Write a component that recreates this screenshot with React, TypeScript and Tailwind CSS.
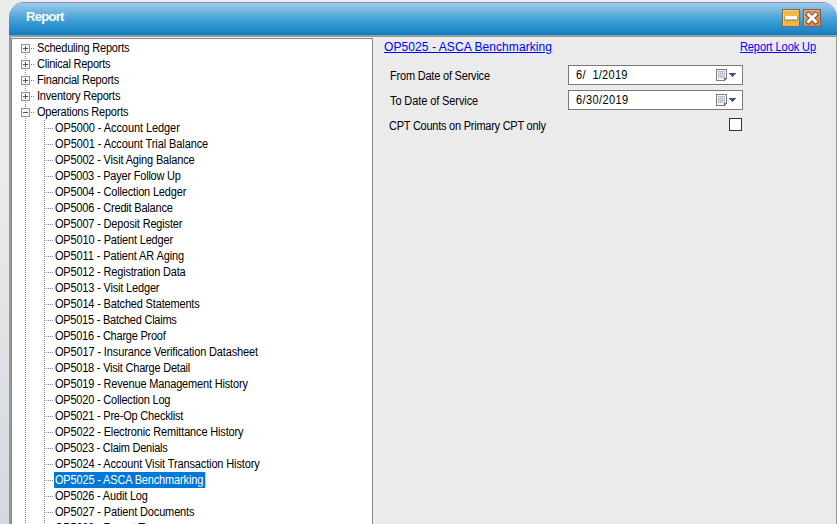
import React from "react";

// Each entry holds a label and its total tracking adjustment in pixels.
const groups: [string, number][] = [
  ["Scheduling Reports", -4], ["Clinical Reports", -4], ["Financial Reports", -4],
  ["Inventory Reports", -4], ["Operations Reports", -4.5],
];

const reports: [string, number][] = [
  ["OP5000 - Account Ledger", -2], ["OP5001 - Account Trial Balance", -3], ["OP5002 - Visit Aging Balance", -5],
  ["OP5003 - Payer Follow Up", -5.5], ["OP5004 - Collection Ledger", -5], ["OP5006 - Credit Balance", -5],
  ["OP5007 - Deposit Register", -4.5], ["OP5010 - Patient Ledger", -4], ["OP5011 - Patient AR Aging", -3],
  ["OP5012 - Registration Data", -5], ["OP5013 - Visit Ledger", -4], ["OP5014 - Batched Statements", -5],
  ["OP5015 - Batched Claims", -6], ["OP5016 - Charge Proof", -5.5], ["OP5017 - Insurance Verification Datasheet", -6],
  ["OP5018 - Visit Charge Detail", -6.5], ["OP5019 - Revenue Management History", -6.5], ["OP5020 - Collection Log", -5],
  ["OP5021 - Pre-Op Checklist", -5.5], ["OP5022 - Electronic Remittance History", -6.5], ["OP5023 - Claim Denials", -6],
  ["OP5024 - Account Visit Transaction History", -6], ["OP5025 - ASCA Benchmarking", -4.5], ["OP5026 - Audit Log", -3.5],
  ["OP5027 - Patient Documents", -4], ["OP5028 - Report Types", -4],
];

function Label({ text, fit = 0, className = "origin-left scale-x-[0.917]" }: { text: string; fit?: number; className?: string }) {
  return <span className={`inline-block whitespace-pre ${className}`} style={{ letterSpacing: `${fit / text.length}px` }}>{text}</span>;
}

function Expander({ open, first }: { open: boolean; first: boolean }) {
  return (
    <svg width="16" height="16" viewBox="0 0 16 16" className="shrink-0" shapeRendering="crispEdges">
      {!first && <path d="M4.5 0V4" stroke="#808080" strokeDasharray="1 1" />}
      <path d="M4.5 14V16" stroke="#808080" strokeDasharray="1 1" />
      <rect x="0.5" y="4.5" width="8" height="8" fill="#f5f5f5" stroke="#919191" />
      <path d="M2 8.5H7" stroke="#3b53a2" />
      {!open && <path d="M4.5 6V11" stroke="#3b53a2" />}
      <path d="M10 8.5H13" stroke="#808080" strokeDasharray="1 1" />
    </svg>
  );
}

function Branch() {
  return (
    <svg width="33" height="16" viewBox="0 0 33 16" className="shrink-0" shapeRendering="crispEdges">
      <path d="M4.5 0V16M23.5 0V16M25 8.5H32" stroke="#808080" strokeDasharray="1 1" />
    </svg>
  );
}

function DateField({ value }: { value: string }) {
  return (
    <div className="flex h-5 w-[175px] items-center border border-[#7a7a7a] bg-white pl-[7px]">
      <div className="w-[140px]"><Label text={value} fit={value.includes(" ") ? 3 : 4} /></div>
      <svg width="24" height="14" viewBox="0 0 24 14" shapeRendering="crispEdges">
        <path d="M.5 1.5h10v8l-2 3h-8z" fill="#f6f6fa" stroke="#82777b" />
        <path d="M2 3h7v7H2z" fill="#b5bfd0" />
        <path d="M3 4h1v1H3zM5 4h1v1H5zM7 4h1v1H7zM3 6h1v1H3zM5 6h1v1H5zM7 6h1v1H7zM3 8h1v1H3zM5 8h1v1H5zM7 8h1v1H7z" fill="white" />
        <path d="M8 10h3v1h-1v1H9v1H8z" fill="#75696b" />
        <path d="M13 5h7v1h-1v1h-1v1h-1v1h-1V8h-1V7h-1V6h-1z" fill="#42597f" />
      </svg>
    </div>
  );
}

export default function App() {
  return (
    <div className="flex h-[524px] w-[837px] overflow-hidden bg-linear-to-b from-[#ececec] from-30% to-[#d2d9df] pt-[2px] pl-[9px] font-['Liberation_Sans',sans-serif] text-[12px] leading-4 text-black">
      <div className="flex w-[828px] flex-col overflow-hidden rounded-t-[15px] border-t border-[#8f8bc4] bg-[#ebebeb]">
        <header className="flex h-8 shrink-0 items-start justify-between bg-linear-to-b from-[#9acbea] via-[#43a2d7] to-[#087fc4] pt-[6px] pr-4 pl-[17px]">
          <h1 className="text-[13px] font-bold tracking-[-0.7px] text-white">Report</h1>
          <div className="flex gap-[3px]">
            <svg width="18" height="18">
              <rect x=".5" y=".5" width="17" height="17" fill="#f0b64a" stroke="#7d6b4c" />
              <path d="M1.5 16V1.5H16" fill="none" stroke="#f6cf83" />
              <rect x="2.5" y="7.5" width="13" height="4" fill="#8d7144" />
              <rect x="3" y="7" width="12" height="3.5" fill="white" />
            </svg>
            <svg width="18" height="18">
              <rect x=".5" y=".5" width="17" height="17" fill="#dd8d50" stroke="#7c5f50" />
              <path d="M1.5 16V1.5H16" fill="none" stroke="#e6ae86" />
              <path d="M5.5 5.8l7 7M12.5 5.8l-7 7" stroke="#7b5847" strokeWidth="5" strokeLinecap="square" />
              <path d="M5.5 5.5l7 7M12.5 5.5l-7 7" stroke="white" strokeWidth="3" strokeLinecap="square" />
            </svg>
          </div>
        </header>
        <div className="flex min-h-0 flex-1 border-t-2 border-r border-l-2 border-[#999]">
          <aside className="mt-px h-[490px] w-[362px] shrink-0 overflow-hidden border border-[#828790] bg-white pt-px pl-[9px]">
            {groups.map(([text, fit], i) => (
              <div key={text} className="flex h-4 whitespace-nowrap">
                <Expander open={i === 4} first={i === 0} />
                <Label text={text} fit={fit} />
              </div>
            ))}
            {reports.map(([text, fit]) => (
              <div key={text} className="flex h-4 whitespace-nowrap">
                <Branch />
                <Label text={text} fit={fit} className={text.startsWith("OP5025") ? "origin-left scale-x-[0.917] bg-[#0078d7] pr-[2px] pl-px text-white" : "origin-left scale-x-[0.917] pl-px"} />
              </div>
            ))}
          </aside>
          <main className="flex-1 pt-[2px] pl-[11px]">
            <div className="flex justify-between pr-5 text-[#0000ff] underline">
              <Label text="OP5025 - ASCA Benchmarking" className="text-[12px]" fit={2} />
              <Label text="Report Look Up" fit={-1} className="origin-right scale-x-[0.917]" />
            </div>
            <div className="mt-[10px] flex h-5 items-center">
              <div className="w-[184px] pt-[2px] pl-[6px]"><Label text="From Date of Service" fit={-4.5} /></div>
              <DateField value="6/  1/2019" />
            </div>
            <div className="mt-[5px] flex h-5 items-center">
              <div className="w-[184px] pt-[2px] pl-[6px]"><Label text="To Date of Service" fit={-2} /></div>
              <DateField value="6/30/2019" />
            </div>
            <div className="mt-[8px] flex h-[13px] items-center">
              <div className="w-[345px] pt-[2px] pl-[5px]"><Label text="CPT Counts on Primary CPT only" fit={-8} /></div>
              <div className="h-[13px] w-[13px] border border-[#333] bg-white" />
            </div>
          </main>
        </div>
      </div>
    </div>
  );
}
